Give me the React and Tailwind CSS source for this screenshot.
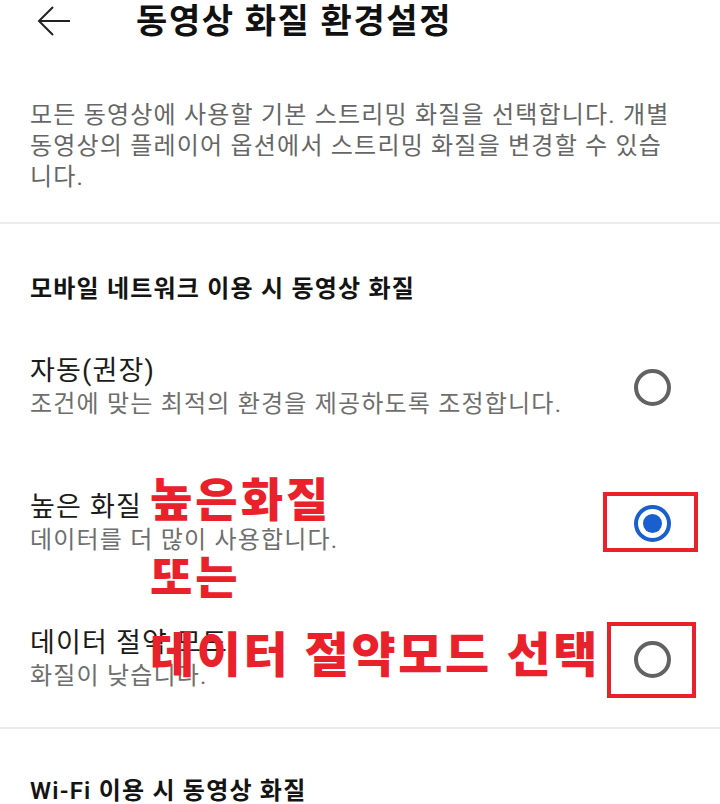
import React from 'react';

const options = [
  { id: 'auto', title: '자동(권장)', desc: '조건에 맞는 최적의 환경을 제공하도록 조정합니다.' },
  { id: 'high', title: '높은 화질', desc: '데이터를 더 많이 사용합니다.' },
  { id: 'saver', title: '데이터 절약 모드', desc: '화질이 낮습니다.' },
];

const Radio = ({ checked }) =>
  checked ? (
    <span className="flex h-[37px] w-[37px] items-center justify-center rounded-full border-[4px] border-[#1a5fcf]">
      <span className="h-[19px] w-[19px] rounded-full bg-[#1a5fcf]" />
    </span>
  ) : (
    <span className="block h-[37px] w-[37px] rounded-full border-[4px] border-[#626262]" />
  );

const BackArrow = () => (
  <svg width="34" height="30" viewBox="0 0 34 30" fill="none" stroke="#222" strokeWidth="2">
    <path d="M33 15H2M16 1L2 15l14 14" />
  </svg>
);

const SectionTitle = ({ children, className = '' }) => (
  <div className={`px-[30px] pb-[15px] text-[24px] font-semibold leading-[30px] tracking-[1.2px] text-[#141414] ${className}`}>
    {children}
  </div>
);

export default function App() {
  const selected = 'high';

  return (
    <div className="relative flex h-[804px] w-[720px] flex-col overflow-hidden bg-white font-['Roboto','Noto_Sans_CJK_KR',sans-serif]">
      {/* header */}
      <header className="flex h-[42px] shrink-0 items-center gap-[65px] pl-[37px]">
        <BackArrow />
        <h1 className="text-[34px] font-bold leading-[42px] tracking-[1.6px] text-[#111]">동영상 화질 환경설정</h1>
      </header>

      {/* description */}
      <div className="mt-[58px] flex flex-col px-[30px] pb-[29px] text-[24px] leading-[31px] tracking-[1.2px] text-[#666]">
        <p>모든 동영상에 사용할 기본 스트리밍 화질을 선택합니다. 개별</p>
        <p>동영상의 플레이어 옵션에서 스트리밍 화질을 변경할 수 있습</p>
        <p>니다.</p>
      </div>

      <div className="h-[2px] shrink-0 bg-[#ececec]" />

      <SectionTitle className="pt-[50px]">모바일 네트워크 이용 시 동영상 화질</SectionTitle>

      <div className="flex flex-col">
        {options.map((o) => (
          <div key={o.id} className="flex h-[136px] items-center justify-between pl-[30px] pr-[49px]">
            <div className="flex flex-col">
              <span className="text-[27px] leading-[35px] tracking-[1.2px] text-[#1b1b1b]">{o.title}</span>
              <span className="text-[24px] leading-[31px] tracking-[1.2px] text-[#6e6e6e]">{o.desc}</span>
            </div>
            <Radio checked={o.id === selected} />
          </div>
        ))}
      </div>

      <div className="h-[2px] shrink-0 bg-[#ececec]" />

      <SectionTitle className="pt-[47px]">Wi-Fi 이용 시 동영상 화질</SectionTitle>

      {/* red callouts drawn over the list */}
      <div className="absolute left-[150px] top-[478px] text-[46px] font-black leading-[45px] tracking-[3px] text-[#e8212b]">높은화질</div>
      <div className="absolute left-[150px] top-[556px] text-[46px] font-black leading-[45px] tracking-[3px] text-[#e8212b]">또는</div>
      <div className="absolute left-[150px] top-[632px] text-[48px] font-black leading-[48px] tracking-[2.6px] text-[#e8212b]">데이터 절약모드 선택</div>
      <div className="absolute left-[603px] top-[492px] h-[60px] w-[95px] border-[4px] border-[#e8212b]" />
      <div className="absolute left-[607px] top-[622px] h-[76px] w-[89px] border-[4px] border-[#e8212b]" />
    </div>
  );
}
